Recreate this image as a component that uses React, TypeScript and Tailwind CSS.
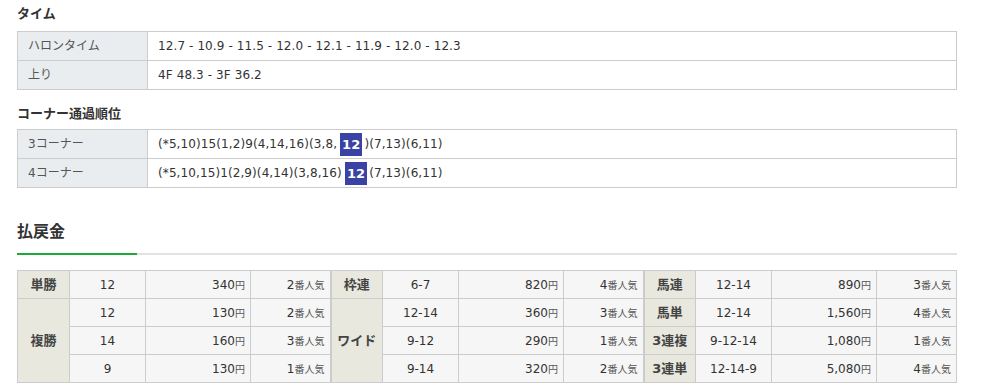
import React from "react";

const FONT = { fontFamily: '"DejaVu Sans", "Noto Sans CJK JP", sans-serif' };

function Hl({ children }: { children: React.ReactNode }) {
  return (
    <span className="inline-block h-[23px] leading-[23px] px-[2px] ml-[3px] mr-[2px] bg-[#3943a6] text-white font-bold text-[13px] align-middle">
      {children}
    </span>
  );
}

function InfoTable({ rows }: { rows: [string, React.ReactNode][] }) {
  return (
    <table className="w-[940px] table-fixed border-collapse">
      <colgroup>
        <col className="w-[130px]" />
        <col />
      </colgroup>
      <tbody>
        {rows.map(([k, v], i) => (
          <tr key={i} className="h-[29px]">
            <td className="border border-[#cccccc] bg-[#eaedf0] pl-[10px] text-[#555] text-[12px] p-0">{k}</td>
            <td className="border border-[#cccccc] bg-white pl-[10px] text-[#333] text-[12px] p-0 whitespace-nowrap tracking-[0.1px]">{v}</td>
          </tr>
        ))}
      </tbody>
    </table>
  );
}

type Bet = { v: string; a: string; n: string };

function Yen({ a }: { a: string }) {
  return (
    <>
      {a}
      <span className="text-[10px] text-[#555]">円</span>
    </>
  );
}
function Ninki({ n }: { n: string }) {
  return (
    <>
      {n}
      <span className="text-[10px] text-[#555]">番人気</span>
    </>
  );
}

const base = "border-[#cccccc] border-solid p-0 text-[12px] text-[#333]";

export default function App() {
  const g1: Bet[] = [
    { v: "12", a: "340", n: "2" },
    { v: "12", a: "130", n: "2" },
    { v: "14", a: "160", n: "3" },
    { v: "9", a: "130", n: "1" },
  ];
  const g2: Bet[] = [
    { v: "6-7", a: "820", n: "4" },
    { v: "12-14", a: "360", n: "3" },
    { v: "9-12", a: "290", n: "1" },
    { v: "9-14", a: "320", n: "2" },
  ];
  const g3: (Bet & { l: string })[] = [
    { l: "馬連", v: "12-14", a: "890", n: "3" },
    { l: "馬単", v: "12-14", a: "1,560", n: "4" },
    { l: "3連複", v: "9-12-14", a: "1,080", n: "1" },
    { l: "3連単", v: "12-14-9", a: "5,080", n: "4" },
  ];

  const valCells = (b: Bet, row: number, dashed: boolean) => {
    const tb = dashed
      ? `${row >= 2 ? "border-t border-t-dashed" : "border-t"} ${row >= 1 && row <= 2 ? "border-b border-b-dashed" : "border-b"}`
      : "border-t border-b";
    const cls = `${base} ${tb} border-x bg-[#f6f6f6]`;
    return (
      <>
        <td className={`${cls} text-center`}>{b.v}</td>
        <td className={`${cls} text-right pr-[5px]`}>
          <Yen a={b.a} />
        </td>
        <td className={`${cls} text-right pr-[5px]`}>
          <Ninki n={b.n} />
        </td>
      </>
    );
  };

  const lbl = `${base} border bg-[#e8e8df] text-center font-bold text-[13px] text-[#444]`;

  return (
    <div className="min-h-[389px] bg-white" style={FONT}>
      <div className="ml-[17px] w-[940px]">
        <div className="h-[31px] flex items-center pb-[3px] text-[13px] font-bold text-[#333]">タイム</div>
        <InfoTable
          rows={[
            ["ハロンタイム", "12.7 - 10.9 - 11.5 - 12.0 - 12.1 - 11.9 - 12.0 - 12.3"],
            ["上り", "4F 48.3 - 3F 36.2"],
          ]}
        />
        <div className="h-[39px] pt-[8px] flex items-center text-[13px] font-bold text-[#333]">コーナー通過順位</div>
        <InfoTable
          rows={[
            [
              "3コーナー",
              <>
                (*5,10)15(1,2)9(4,14,16)(3,8,<Hl>12</Hl>)(7,13)(6,11)
              </>,
            ],
            [
              "4コーナー",
              <>
                (*5,10,15)1(2,9)(4,14)(3,8,16)<Hl>12</Hl>(7,13)(6,11)
              </>,
            ],
          ]}
        />
        <div className="mt-[28px] h-[32px] flex items-center text-[16px] font-bold text-[#333]">払戻金</div>
        <div className="mt-[5px] flex">
          <div className="w-[120px] h-[2px] bg-[#1eaa39]" />
          <div className="flex-1 h-[2px] bg-[#e2e2e2]" />
        </div>
        <table className="mt-[15px] w-[940px] table-fixed border-collapse">
          <colgroup>
            <col className="w-[52px]" />
            <col className="w-[76px]" />
            <col className="w-[105px]" />
            <col className="w-[80px]" />
            <col className="w-[52px]" />
            <col className="w-[76px]" />
            <col className="w-[105px]" />
            <col className="w-[80px]" />
            <col className="w-[52px]" />
            <col className="w-[76px]" />
            <col className="w-[105px]" />
            <col className="w-[80px]" />
          </colgroup>
          <tbody>
            {[0, 1, 2, 3].map((r) => (
              <tr key={r} className="h-[28px]">
                {r === 0 && <td className={lbl}>単勝</td>}
                {r === 1 && (
                  <td rowSpan={3} className={lbl}>
                    複勝
                  </td>
                )}
                {valCells(g1[r], r, true)}
                {r === 0 && <td className={`${lbl} border-l-2`}>枠連</td>}
                {r === 1 && (
                  <td rowSpan={3} className={`${lbl} border-l-2`}>
                    ワイド
                  </td>
                )}
                {valCells(g2[r], r, true)}
                <td className={`${lbl} border-l-2`}>{g3[r].l}</td>
                {valCells(g3[r], r, false)}
              </tr>
            ))}
          </tbody>
        </table>
      </div>
    </div>
  );
}
